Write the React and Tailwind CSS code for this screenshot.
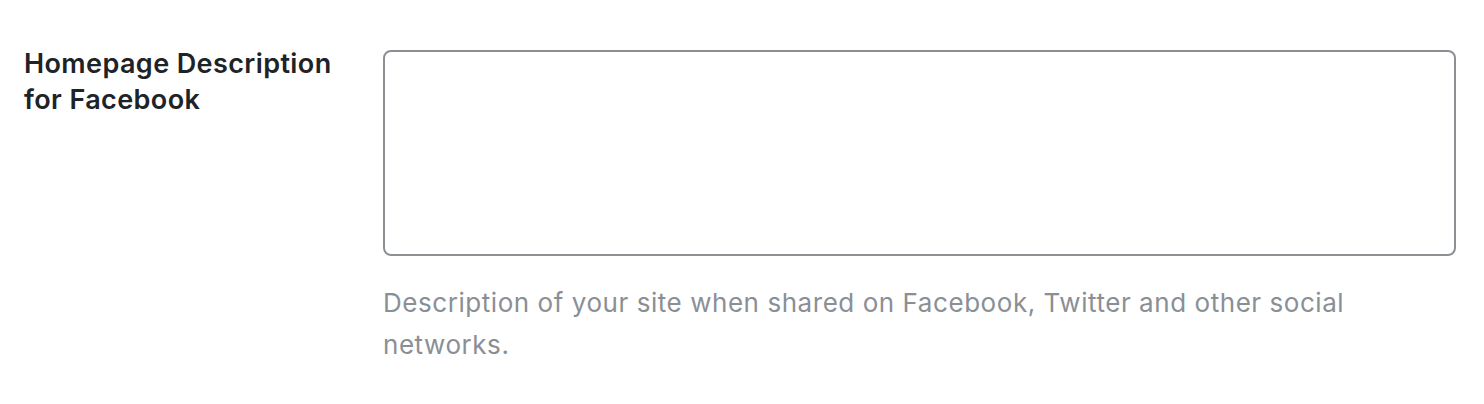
export default function App() {
  return (
    <div className="w-[1484px] h-[404px] bg-white flex" style={{ fontFamily: 'Inter, "Liberation Sans", sans-serif' }}>
      <div className="w-[383px] shrink-0 pl-6 pt-[46px]">
        <label className="block text-[27px] leading-[36px] font-semibold tracking-[0.4px] text-[#1d2327]">
          Homepage Description
          <br />
          for Facebook
        </label>
      </div>
      <div className="w-[1073px] pt-[50px]">
        <textarea className="block w-full h-[206px] border-2 border-[#8c8f94] rounded-[8px] resize-none outline-none bg-white" />
        <p className="mt-[26px] text-[26px] leading-[42px] tracking-[0.55px] text-[#8a8f96] w-[1000px]">
          Description of your site when shared on Facebook, Twitter and other social networks.
        </p>
      </div>
    </div>
  );
}
